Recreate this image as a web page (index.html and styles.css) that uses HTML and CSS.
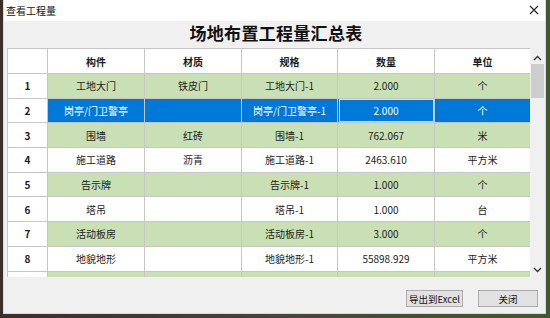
FILE: index.html
```html
<!DOCTYPE html>
<html lang="zh-CN">
<head>
    <meta charset="UTF-8">
    <title>查看工程量</title>
    <link rel="stylesheet" href="styles.css">
</head>
<body>
    <div class="window">
        <div class="titlebar">
            <span class="caption">查看工程量</span>
            <svg class="close" width="10" height="10" viewBox="0 0 10 10">
                <path d="M1 1 L9 9 M9 1 L1 9" stroke="#222" stroke-width="1.1" fill="none"/>
            </svg>
        </div>
        <div class="content">
            <h1 class="report-title">场地布置工程量汇总表</h1>
            <div class="grid">
                <div class="grid-view">
                    <table class="sheet">
                        <colgroup>
                            <col class="c-no">
                            <col class="c-97">
                            <col class="c-97">
                            <col class="c-96">
                            <col class="c-97">
                            <col class="c-96">
                        </colgroup>
                        <thead>
                            <tr>
                                <th></th>
                                <th>构件</th>
                                <th>材质</th>
                                <th>规格</th>
                                <th>数量</th>
                                <th>单位</th>
                            </tr>
                        </thead>
                        <tbody>
                            <tr class="odd">
                                <td class="no">1</td><td>工地大门</td><td>铁皮门</td><td>工地大门-1</td><td>2.000</td><td>个</td>
                            </tr>
                            <tr class="selected">
                                <td class="no">2</td><td>岗亭/门卫警亭</td><td></td><td>岗亭/门卫警亭-1</td><td class="current">2.000</td><td>个</td>
                            </tr>
                            <tr class="odd">
                                <td class="no">3</td><td>围墙</td><td>红砖</td><td>围墙-1</td><td>762.067</td><td>米</td>
                            </tr>
                            <tr>
                                <td class="no">4</td><td>施工道路</td><td>沥青</td><td>施工道路-1</td><td>2463.610</td><td>平方米</td>
                            </tr>
                            <tr class="odd">
                                <td class="no">5</td><td>告示牌</td><td></td><td>告示牌-1</td><td>1.000</td><td>个</td>
                            </tr>
                            <tr>
                                <td class="no">6</td><td>塔吊</td><td></td><td>塔吊-1</td><td>1.000</td><td>台</td>
                            </tr>
                            <tr class="odd">
                                <td class="no">7</td><td>活动板房</td><td></td><td>活动板房-1</td><td>3.000</td><td>个</td>
                            </tr>
                            <tr>
                                <td class="no">8</td><td>地貌地形</td><td></td><td>地貌地形-1</td><td>55898.929</td><td>平方米</td>
                            </tr>
                            <tr class="odd">
                                <td class="no"></td><td></td><td></td><td></td><td></td><td></td>
                            </tr>
                        </tbody>
                    </table>
                </div>
                <div class="scrollbar">
                    <svg class="arrow" width="9" height="6" viewBox="0 0 9 6">
                        <path d="M1 5 L4.5 1.5 L8 5" stroke="#333" stroke-width="1.3" fill="none"/>
                    </svg>
                    <div class="track">
                        <div class="thumb"></div>
                    </div>
                    <svg class="arrow" width="9" height="6" viewBox="0 0 9 6">
                        <path d="M1 1 L4.5 4.5 L8 1" stroke="#333" stroke-width="1.3" fill="none"/>
                    </svg>
                </div>
            </div>
            <div class="footer">
                <button class="btn btn-export">导出到Excel</button>
                <button class="btn btn-close">关闭</button>
            </div>
        </div>
    </div>
</body>
</html>
```

FILE: styles.css
```css
*{box-sizing: border-box;}
body{
    margin: 0;
    height: 318px;
    overflow: hidden;
    background: linear-gradient(90deg, #3a2f2a 0%, #4a4536 50%, #3f5a2e 100%);
    font-family: "Noto Sans CJK SC", "Noto Sans", sans-serif;
    color: #1b1b1b;
}

.window{
    margin-left: 3px;
    width: 543px;
    height: 314px;
    background-color: #f0f0f0;
    border: 1px solid #dadada;
    border-top: none;
    display: flex;
    flex-direction: column;
}

/* 타이틀 바 */
.titlebar{
    height: 21px;
    background-color: #fff;
    display: flex;
    align-items: center;
    justify-content: space-between;
    padding: 0 6px 1px 2px;
}
.titlebar .caption{
    font-size: 10px;
    color: #111;
}

.content{
    flex: 1;
    padding-left: 3px;
    display: flex;
    flex-direction: column;
}
.report-title{
    margin: 0;
    height: 27px;
    line-height: 23px;
    text-align: center;
    font-size: 17px;
    font-weight: bold;
    color: #111;
    letter-spacing: 0.3px;
}

.grid{
    height: 229px;
    display: flex;
}
.grid-view{
    width: 523px;
    height: 229px;
    overflow: hidden;
    background-color: #fff;
}
.sheet{
    width: 523px;
    table-layout: fixed;
    border-collapse: collapse;
    font-size: 10px;
}
.sheet col.c-no{width: 40px;}
.sheet col.c-97{width: 97px;}
.sheet col.c-96{width: 96px;}
.sheet th,
.sheet td{
    border: 1px solid #c6c6c6;
    text-align: center;
    padding: 0;
    white-space: nowrap;
    overflow: hidden;
}
.sheet th{
    height: 25px;
    font-weight: bold;
    background-color: #fff;
}
.sheet td{
    height: 24.7px;
}
.sheet td.no{
    font-weight: bold;
    background-color: #fff;
}
.sheet tr.odd td{background-color: #c8e0b4;}
.sheet tr.odd td.no{background-color: #fff;}
.sheet tr.selected td{
    background-color: #0078d7;
    color: #fff;
}
.sheet tr.selected td.no{
    background-color: #fff;
    color: #1b1b1b;
}
.sheet tr.selected td.current{
    outline: 1px solid #cfe2f5;
    outline-offset: -2px;
}

/* 스크롤바 */
.scrollbar{
    width: 15px;
    display: flex;
    flex-direction: column;
    align-items: center;
    background-color: #f0f0f0;
    padding: 7px 0 4px;
}
.scrollbar .track{
    flex: 1;
    width: 100%;
    padding: 3px 1px 0 1px;
}
.scrollbar .thumb{
    height: 34px;
    background-color: #cdcdcd;
}

.footer{
    flex: 1;
    display: flex;
    justify-content: flex-end;
    align-items: flex-start;
    gap: 15px;
    padding: 13px 7px 0 0;
}
.btn{
    height: 17px;
    padding: 0;
    font-family: "Noto Sans CJK SC", "Noto Sans", sans-serif;
    font-size: 9.5px;
    color: #111;
    background-color: #e1e1e1;
    border: 1px solid #adadad;
    line-height: 14px;
}
.btn-export{width: 57px;}
.btn-close{width: 60px;}
```
